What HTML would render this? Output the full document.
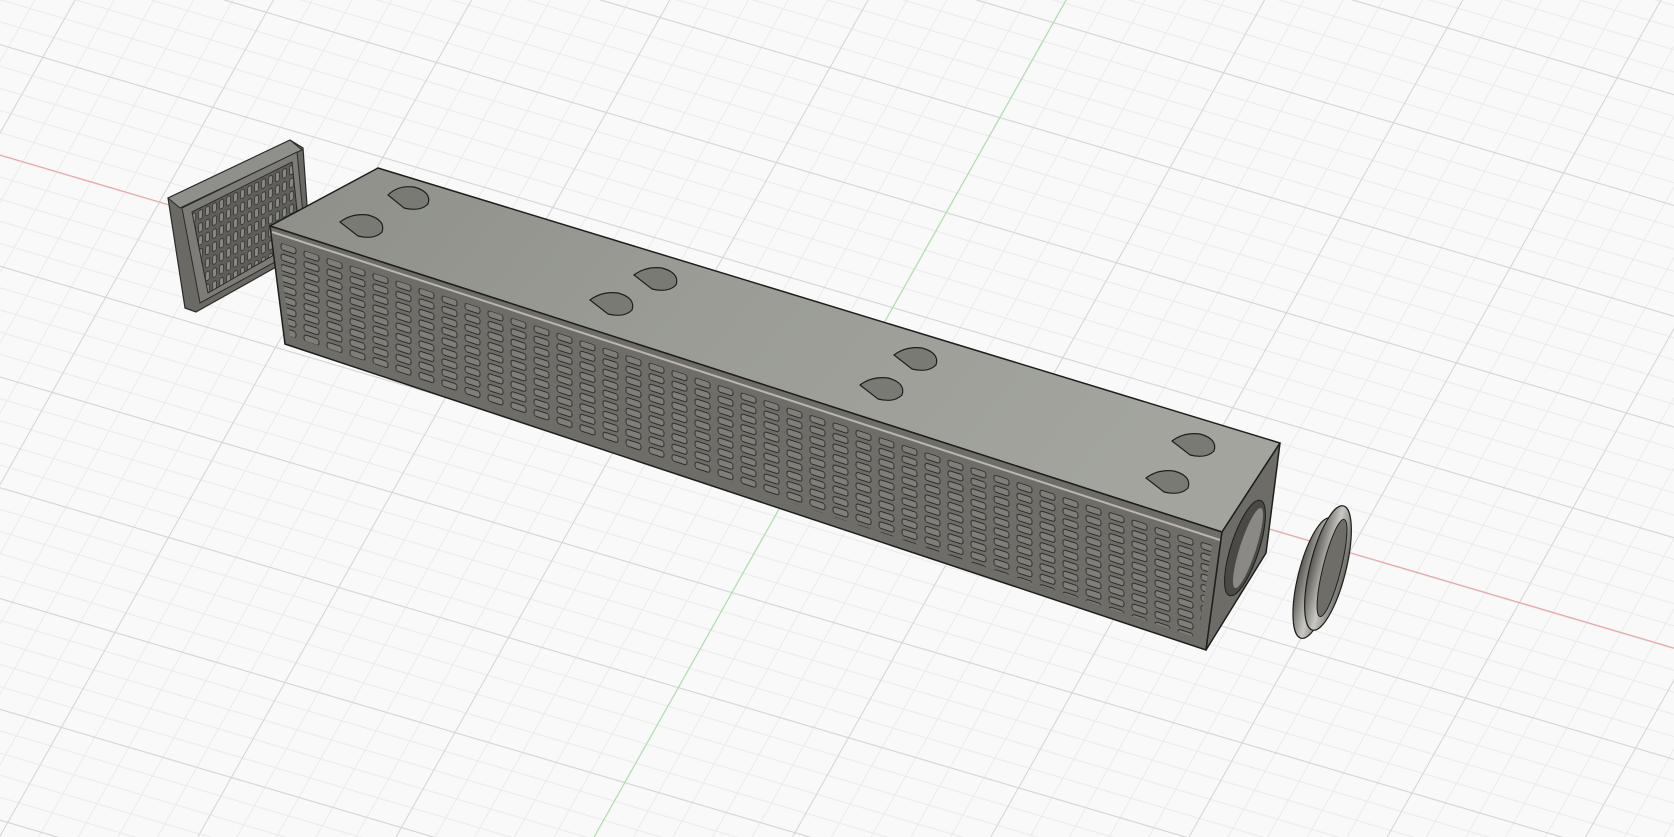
<!DOCTYPE html>
<html><head><meta charset="utf-8"><style>html,body{margin:0;padding:0;background:#f9f9f9;overflow:hidden}svg{display:block}</style></head>
<body>
<svg width="1674" height="837" viewBox="0 0 1674 837" xmlns="http://www.w3.org/2000/svg">
<defs>
<pattern id="grid" width="170" height="95" patternUnits="userSpaceOnUse" patternTransform="matrix(1,0.2946,-0.564,1,839,402)">
<rect width="170" height="95" fill="#f9f9f9"/>
<g stroke="#ebebeb" stroke-width="1">
<line x1="0" y1="19" x2="170" y2="19"/><line x1="0" y1="38" x2="170" y2="38"/><line x1="0" y1="57" x2="170" y2="57"/><line x1="0" y1="76" x2="170" y2="76"/>
<line x1="34" y1="0" x2="34" y2="95"/><line x1="68" y1="0" x2="68" y2="95"/><line x1="102" y1="0" x2="102" y2="95"/><line x1="136" y1="0" x2="136" y2="95"/>
</g>
<g stroke="#d4d4d4" stroke-width="1">
<line x1="0" y1="0.5" x2="170" y2="0.5"/><line x1="0.5" y1="0" x2="0.5" y2="95"/>
</g>
</pattern>
<linearGradient id="top" x1="0" y1="0" x2="1" y2="0.3">
<stop offset="0" stop-color="#8e8f89"/><stop offset="0.5" stop-color="#9b9c96"/><stop offset="1" stop-color="#a3a49e"/></linearGradient>
<pattern id="slots" width="23" height="10.5" patternUnits="userSpaceOnUse" patternTransform="translate(278,240) skewY(18)">
<rect width="23" height="10.5" fill="#6e6d67"/>
<rect x="3" y="2" width="15" height="6.5" rx="2.5" fill="#7f7e78" stroke="#2a2a28" stroke-width="0.9"/>
</pattern>
<pattern id="slots2" width="7" height="13" patternUnits="userSpaceOnUse" patternTransform="translate(190,200) skewY(-26)">
<rect width="7" height="13" fill="#5f5e59"/>
<rect x="1.5" y="2" width="4" height="9" rx="2" fill="#8a8984" stroke="#222" stroke-width="0.7"/>
</pattern>
<linearGradient id="metal" x1="0" y1="0" x2="1" y2="0">
<stop offset="0" stop-color="#5a5954"/><stop offset="0.5" stop-color="#c9c8c2"/><stop offset="1" stop-color="#6a6964"/></linearGradient>
</defs>
<rect width="1674" height="837" fill="url(#grid)"/>
<line x1="0" y1="155" x2="1674" y2="648" stroke="#f0a0a0" stroke-width="1"/>
<line x1="1066" y1="0" x2="594" y2="837" stroke="#a8e0a8" stroke-width="1"/>

<polygon points="168,198 290,140 303,148 310,248 196,312 185,308" fill="#6a6964" stroke="#2a2a28" stroke-width="1.2"/>
<polygon points="168,198 290,140 302,150 180,208" fill="#8f908a" stroke="#2a2a28" stroke-width="1"/>
<polygon points="182,208 297,152 306,245 200,303" fill="#7d7c77" stroke="#2a2a28" stroke-width="1"/>
<polygon points="192,212 292,162 300,240 208,293" fill="url(#slots2)" stroke="#2a2a28" stroke-width="1"/>

<polygon points="378,168 1280,443 1222,532 270,226" fill="url(#top)" stroke="#1e1e1c" stroke-width="1.5"/>
<polygon points="270,226 1222,532 1206,650 285,344" fill="#6e6d67" stroke="#1e1e1c" stroke-width="1.5"/>
<polygon points="278,242 1212,545 1198,638 290,336" fill="url(#slots)"/>
<line x1="272" y1="232" x2="1220" y2="540" stroke="#b9b7ae" stroke-width="2"/>
<polygon points="1222,532 1280,443 1266,553 1206,650" fill="#6d6c66" stroke="#1e1e1c" stroke-width="1.5"/>
<ellipse cx="1245" cy="548" rx="14" ry="50" transform="rotate(18 1245 548)" fill="#4a4945" stroke="#1e1e1c"/>
<ellipse cx="1248" cy="548" rx="8" ry="42" transform="rotate(18 1248 548)" fill="#8a8984"/>

<g fill="#7a7a74" stroke="#1e1e1c" stroke-width="1.2">
<path d="M388,195 Q398,185 414,187 Q432,192 428,204 Q420,212 404,208 Z"/>
<path d="M340,222 Q352,213 368,215 Q386,220 382,232 Q374,240 358,236 Z"/>
<path d="M634,275 Q646,266 662,268 Q680,273 676,285 Q668,293 652,289 Z"/>
<path d="M590,300 Q602,291 618,293 Q636,298 632,310 Q624,318 608,314 Z"/>
<path d="M894,355 Q906,346 922,348 Q940,353 936,365 Q928,373 912,369 Z"/>
<path d="M860,385 Q872,376 888,378 Q906,383 902,395 Q894,403 878,399 Z"/>
<path d="M1172,441 Q1184,432 1200,434 Q1218,439 1214,451 Q1206,459 1190,455 Z"/>
<path d="M1146,478 Q1158,469 1174,471 Q1192,476 1188,488 Q1180,496 1164,492 Z"/>
</g>

<ellipse cx="1316" cy="578" rx="18" ry="62" transform="rotate(14 1316 578)" fill="url(#metal)" stroke="#1e1e1c" stroke-width="1.2"/>
<ellipse cx="1328" cy="568" rx="18" ry="64" transform="rotate(14 1328 568)" fill="url(#metal)" stroke="#1e1e1c" stroke-width="1.2"/>
<ellipse cx="1332" cy="568" rx="9" ry="50" transform="rotate(14 1332 568)" fill="#6e6d68" stroke="#1e1e1c" stroke-width="1"/>
</svg>
</body></html>
